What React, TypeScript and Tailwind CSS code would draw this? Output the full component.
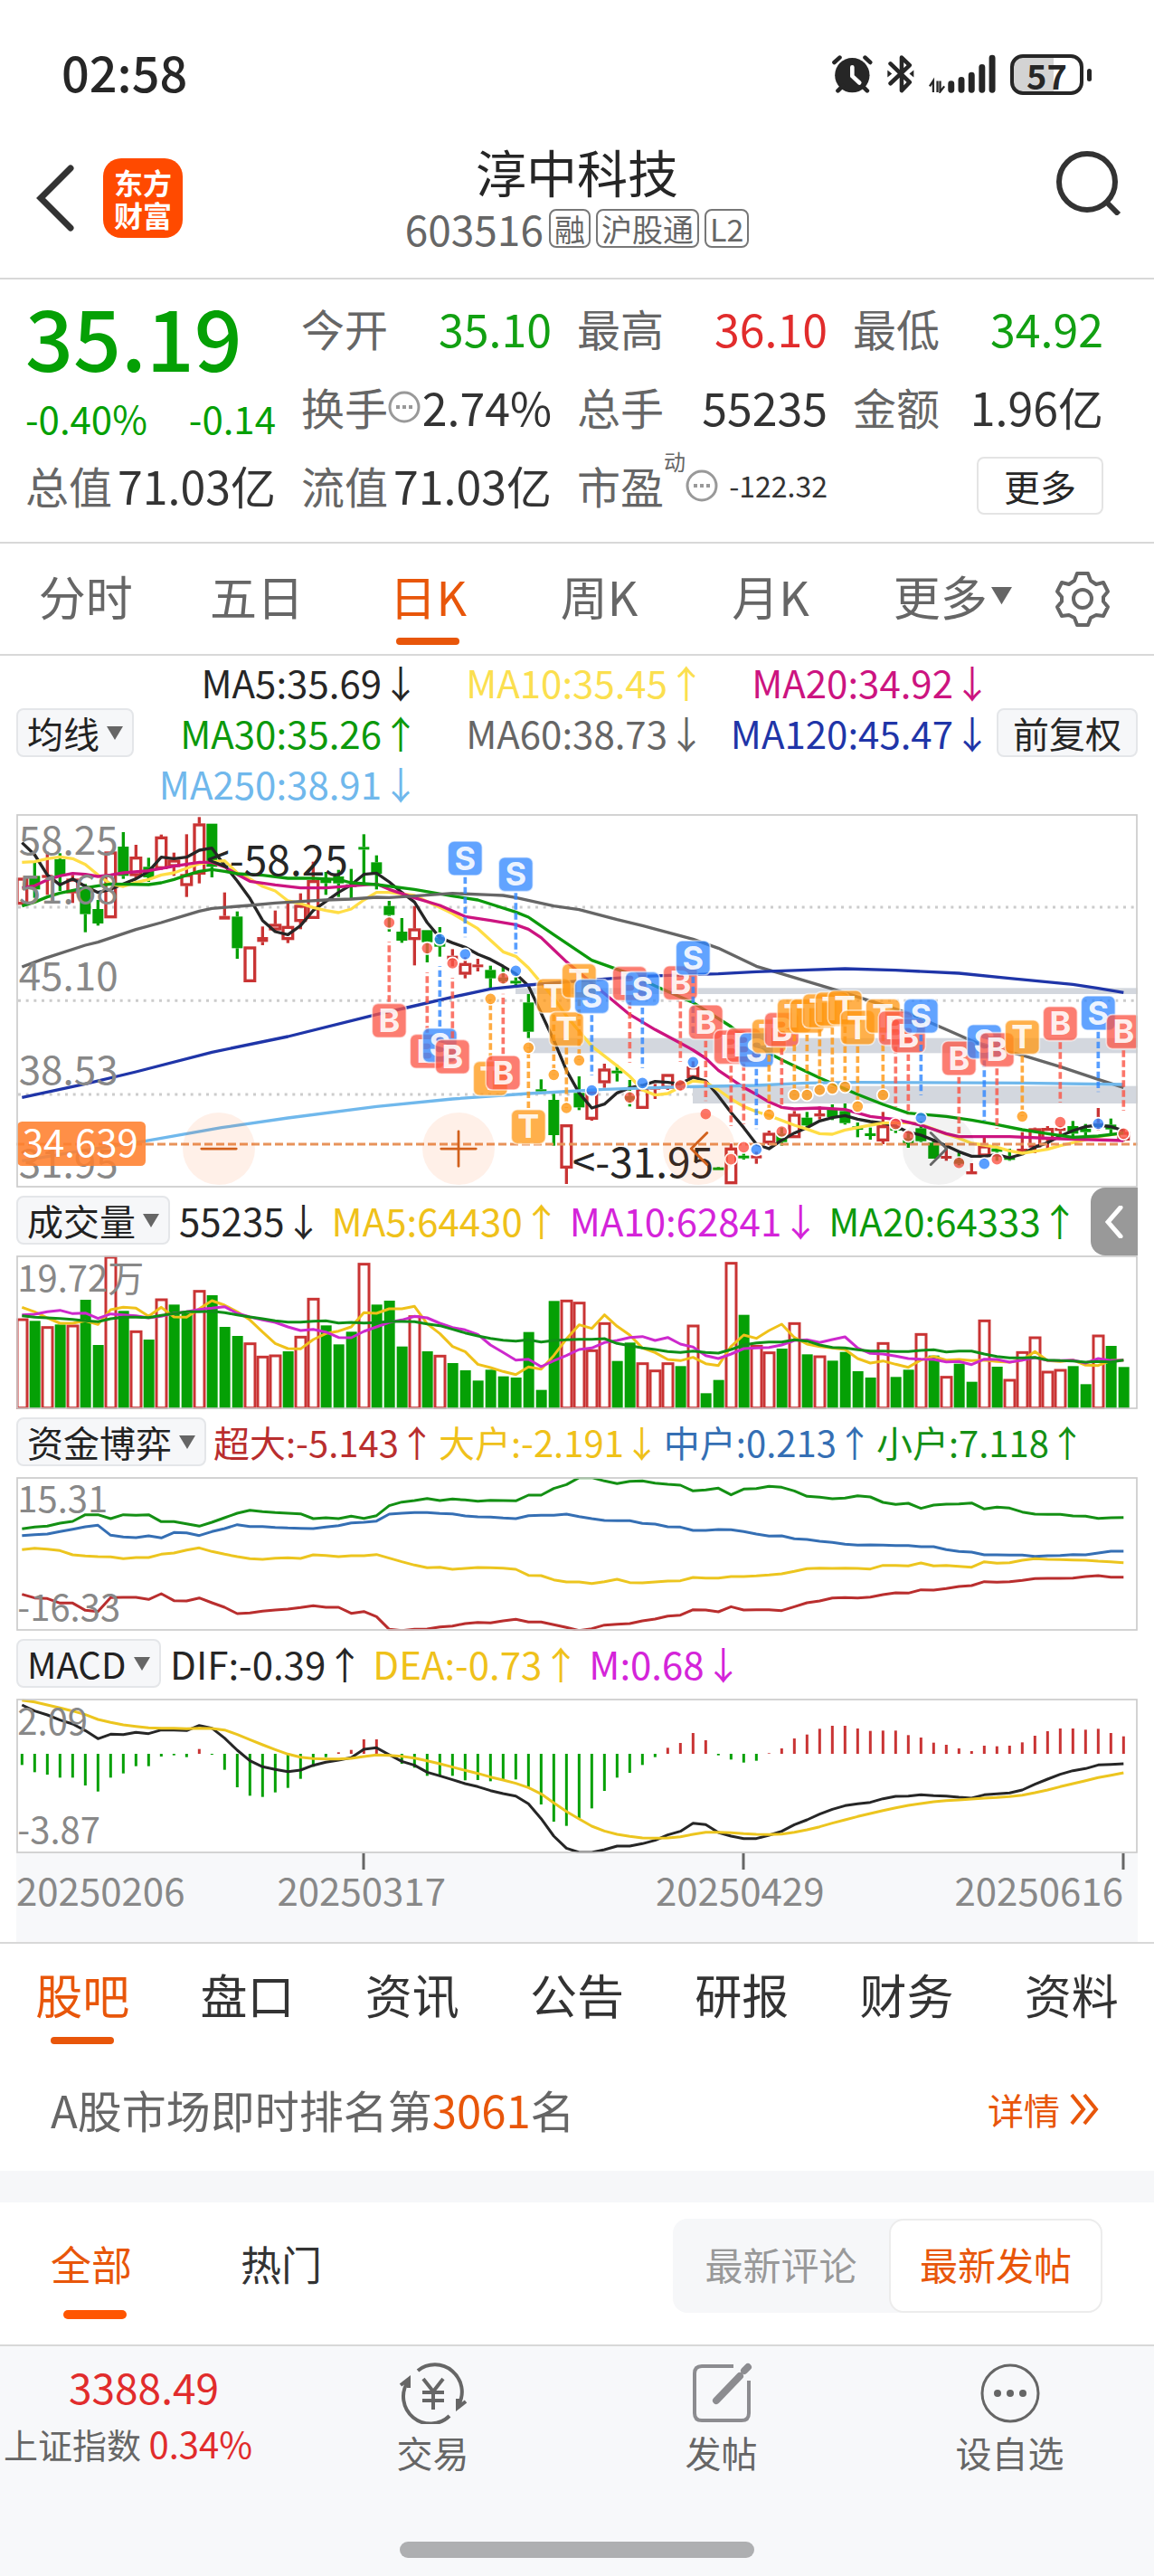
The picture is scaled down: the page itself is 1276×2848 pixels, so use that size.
import type { ReactNode } from 'react'
import { ChevronLeft, Minus, Plus, ChevronRight } from 'lucide-react'

type Point = [number, number]

// Charts are drawn in units of a third of a pixel, one candle every 42 units.
const LEFT = 54
const WIDTH = 3720
const STEP = 42

const RED = '#c93434'
const GREEN = '#05a005'

const xOf = (i: number) => 73 + STEP * i
const toPath = (points: Point[]) => points.map(([x, y]) => `${x},${y}`).join(' ')
const series = (values: number[]) => toPath(values.map((v, i) => [xOf(i), v] as Point))

// index, up/down, high, body top, body bottom, low
type Candle = [number, 'u' | 'd', number, number, number, number]

const candles: Candle[] = [
    [0, 'u', 242, 242, 330, 330], [1, 'd', 190, 235, 280, 308], [2, 'u', 155, 232, 242, 298], [3, 'd', 160, 180, 235, 285],
    [4, 'u', 232, 245, 292, 325], [5, 'd', 262, 275, 362, 422], [6, 'd', 315, 345, 393, 400], [7, 'u', 155, 155, 375, 375],
    [8, 'd', 90, 138, 235, 245], [9, 'u', 132, 172, 235, 242], [10, 'd', 175, 205, 240, 255], [11, 'u', 98, 105, 212, 215],
    [12, 'u', 158, 182, 205, 235], [13, 'u', 97, 230, 268, 305], [14, 'u', 40, 62, 230, 260], [15, 'd', 62, 62, 205, 240],
    [16, 'u', 290, 368, 380, 380], [17, 'd', 353, 370, 475, 510], [18, 'u', 470, 470, 587, 587], [19, 'u', 403, 438, 454, 465],
    [20, 'u', 350, 395, 415, 420], [21, 'u', 327, 402, 447, 458], [22, 'u', 293, 332, 387, 412], [23, 'u', 188, 250, 377, 377],
    [24, 'd', 222, 249, 259, 298], [25, 'd', 215, 237, 260, 305], [26, 'd', 212, 263, 272, 310], [27, 'd', 97, 139, 148, 260],
    [28, 'd', 167, 190, 228, 280], [29, 'd', 318, 335, 365, 420], [30, 'd', 375, 420, 450, 457], [31, 'u', 335, 410, 447, 532],
    [32, 'd', 415, 415, 455, 522], [33, 'd', 405, 440, 470, 503], [34, 'u', 478, 500, 515, 535], [35, 'u', 505, 525, 562, 575],
    [36, 'u', 510, 529, 538, 552], [37, 'd', 533, 547, 575, 610], [38, 'd', 535, 572, 585, 595], [39, 'd', 570, 583, 592, 598],
    [40, 'd', 627, 655, 752, 773], [41, 'd', 910, 943, 950, 952], [42, 'd', 958, 978, 1095, 1130], [43, 'u', 1060, 1060, 1205, 1257],
    [44, 'd', 900, 955, 1003, 1012], [45, 'u', 945, 950, 1043, 1047], [46, 'u', 858, 875, 922, 938], [47, 'd', 862, 881, 890, 917],
    [48, 'd', 912, 965, 980, 1000], [49, 'u', 930, 940, 1007, 1007], [50, 'u', 925, 936, 944, 975], [51, 'u', 893, 893, 940, 945],
    [52, 'u', 912, 925, 938, 950], [53, 'u', 850, 868, 905, 905], [55, 'd', 1200, 1202, 1211, 1211], [56, 'u', 1123, 1137, 1257, 1257],
    [57, 'd', 1155, 1163, 1172, 1176], [58, 'u', 1150, 1162, 1172, 1190], [59, 'u', 1080, 1088, 1122, 1128], [60, 'd', 1070, 1090, 1118, 1130],
    [61, 'u', 1015, 1025, 1104, 1104], [62, 'd', 1018, 1037, 1063, 1072], [63, 'u', 1000, 1023, 1033, 1043], [64, 'd', 993, 1010, 1035, 1045],
    [65, 'd', 990, 1015, 1055, 1060], [66, 'd', 1053, 1066, 1077, 1102], [67, 'd', 1070, 1089, 1098, 1110], [68, 'u', 1018, 1063, 1115, 1125],
    [69, 'd', 1060, 1070, 1080, 1088], [70, 'd', 1090, 1105, 1125, 1137], [71, 'd', 1050, 1072, 1115, 1118], [72, 'd', 1108, 1120, 1173, 1173],
    [73, 'u', 1130, 1164, 1173, 1180], [74, 'd', 1150, 1175, 1190, 1195], [75, 'u', 1188, 1215, 1225, 1225], [76, 'u', 1103, 1130, 1165, 1175],
    [77, 'd', 1130, 1139, 1150, 1180], [78, 'd', 1140, 1166, 1177, 1180], [79, 'u', 1085, 1140, 1152, 1158], [80, 'u', 1070, 1073, 1135, 1155],
    [81, 'u', 1065, 1072, 1110, 1140], [82, 'u', 1065, 1071, 1081, 1095], [83, 'd', 1048, 1065, 1090, 1108], [84, 'd', 1058, 1074, 1085, 1095],
    [85, 'u', 1005, 1055, 1068, 1080], [86, 'd', 1040, 1060, 1076, 1090], [87, 'u', 1075, 1085, 1112, 1115],
]

const ma5 = [
    125, 165, 232, 265, 245, 270, 290, 280, 262, 245, 220, 173, 178, 173, 150, 143, 200, 252, 310, 383, 420, 430,
    400, 350, 320, 290, 265, 230, 226, 255, 290, 322, 390, 440, 457, 472, 495, 512, 535, 560, 600, 690, 780, 880,
    955, 1005, 992, 955, 938, 930, 917, 920, 925, 903, 915, 965, 1020, 1070, 1125, 1140, 1112, 1088, 1070, 1048, 1037, 1030,
    1042, 1050, 1055, 1065, 1085, 1095, 1112, 1130, 1150, 1165, 1165, 1160, 1170, 1158, 1135, 1120, 1098, 1080, 1067, 1062, 1067, 1080,
]

const averages: { stroke: string; points: Point[] }[] = [
    {
        stroke: '#ffdd45',
        points: [
            [73, 190], [115, 188], [157, 178], [199, 172], [241, 178], [283, 197], [325, 232], [367, 262], [409, 270], [451, 257], [493, 247],
            [535, 232], [577, 225], [619, 210], [661, 195], [703, 188], [745, 185], [787, 225], [829, 245], [871, 270], [913, 285], [955, 318],
            [997, 327], [1039, 340], [1081, 350], [1123, 357], [1165, 345], [1207, 315], [1249, 290], [1291, 290], [1375, 300], [1417, 320],
            [1459, 340], [1501, 360], [1585, 410], [1669, 487], [1711, 502], [1753, 540], [1795, 590], [1837, 640], [1879, 700], [1921, 750],
            [1963, 800], [2047, 865], [2089, 900], [2131, 945], [2173, 962], [2215, 957], [2257, 935], [2299, 915], [2341, 920], [2383, 945],
            [2425, 975], [2467, 1000], [2509, 1017], [2551, 1030], [2635, 1062], [2677, 1075], [2719, 1090], [2761, 1092], [2803, 1078],
            [2887, 1062], [2929, 1055], [3013, 1053], [3055, 1060], [3097, 1075], [3139, 1092], [3181, 1105], [3223, 1122], [3265, 1128],
            [3307, 1135], [3349, 1147], [3391, 1155], [3475, 1142], [3517, 1130], [3559, 1120], [3643, 1100], [3727, 1088],
        ],
    },
    {
        stroke: '#cc1480',
        points: [
            [73, 275], [115, 268], [157, 248], [199, 235], [241, 227], [283, 230], [325, 237], [367, 232], [409, 225], [493, 218], [577, 203],
            [661, 190], [703, 190], [745, 205], [787, 230], [829, 253], [913, 265], [997, 275], [1081, 275], [1165, 268], [1249, 262],
            [1291, 280], [1375, 308], [1459, 333], [1543, 370], [1627, 383], [1711, 397], [1753, 412], [1795, 440], [1837, 480], [1879, 520],
            [1963, 590], [2089, 695], [2173, 745], [2257, 790], [2299, 813], [2341, 840], [2383, 880], [2467, 937], [2509, 960], [2551, 985],
            [2593, 1003], [2635, 1008], [2719, 1005], [2803, 1010], [2887, 1033], [2971, 1043], [3055, 1062], [3139, 1090], [3181, 1100],
            [3349, 1100], [3517, 1107], [3727, 1113],
        ],
    },
    {
        stroke: '#0c990c',
        points: [
            [73, 335], [115, 322], [157, 305], [199, 292], [283, 275], [325, 268], [367, 262], [493, 264], [535, 258], [577, 247], [619, 233],
            [661, 220], [703, 214], [745, 220], [787, 228], [871, 233], [955, 243], [1039, 243], [1123, 247], [1165, 258], [1249, 264],
            [1375, 280], [1501, 302], [1585, 315], [1711, 355], [1753, 372], [1837, 430], [1963, 515], [2089, 560], [2173, 600], [2299, 655],
            [2425, 735], [2509, 800], [2593, 845], [2719, 905], [2845, 960], [2929, 993], [3013, 1022], [3139, 1033], [3223, 1045],
            [3307, 1060], [3391, 1077], [3475, 1090], [3559, 1102], [3643, 1098], [3727, 1088],
        ],
    },
    {
        stroke: '#666666',
        points: [
            [73, 537], [150, 508], [283, 465], [325, 455], [451, 413], [535, 390], [661, 352], [703, 343], [829, 333], [913, 325], [997, 320],
            [1081, 315], [1165, 312], [1249, 306], [1291, 307], [1375, 302], [1501, 293], [1627, 298], [1669, 300], [1711, 307], [1837, 335],
            [1921, 347], [2047, 380], [2131, 400], [2299, 445], [2383, 475], [2509, 535], [2593, 560], [2761, 610], [2887, 650], [3013, 690],
            [3139, 745], [3265, 800], [3391, 830], [3517, 868], [3643, 910], [3727, 937],
        ],
    },
    {
        stroke: '#1f35a8',
        points: [
            [73, 970], [283, 925], [451, 885], [703, 820], [955, 768], [1249, 695], [1350, 672], [1501, 637], [1627, 610], [1753, 597],
            [1879, 587], [2005, 577], [2131, 568], [2383, 560], [2509, 553], [2677, 547], [2803, 543], [2971, 548], [3181, 558], [3349, 575],
            [3559, 595], [3643, 608], [3727, 622],
        ],
    },
    {
        stroke: '#70b8ec',
        points: [
            [73, 1180], [283, 1145], [480, 1115], [735, 1070], [955, 1038], [1249, 1000], [1501, 975], [1753, 957], [2005, 943], [2257, 935],
            [2509, 930], [2677, 922], [2845, 920], [3391, 922], [3727, 927],
        ],
    },
]

// index, letter, badge centre, dot centre
type Mark = [number, 'B' | 'S' | 'T', number, number]

const marks: Mark[] = [
    [29, 'B', 715, 390], [32, 'B', 817, 475], [33, 'S', 797, 445], [34, 'B', 835, 525], [35, 'S', 177, 495], [37, 'T', 907, 643],
    [38, 'B', 888, 575], [39, 'S', 230, 550], [40, 'T', 1067, 805], [42, 'T', 633, 895], [43, 'T', 743, 1005], [44, 'T', 583, 847],
    [45, 'S', 635, 947], [48, 'B', 592, 970], [49, 'S', 610, 922], [52, 'B', 590, 930], [53, 'S', 507, 853], [54, 'B', 720, 1025],
    [56, 'B', 803, 1175], [57, 'B', 797, 1135], [58, 'S', 813, 1143], [59, 'T', 767, 1027], [60, 'B', 745, 1083], [61, 'T', 700, 962],
    [62, 'T', 700, 962], [63, 'T', 683, 945], [64, 'T', 677, 940], [65, 'T', 672, 935], [66, 'T', 738, 1000], [68, 'T', 700, 962],
    [69, 'B', 740, 1058], [70, 'B', 765, 1098], [71, 'S', 700, 1038], [74, 'B', 840, 1187], [76, 'S', 785, 1190], [77, 'B', 812, 1175],
    [79, 'T', 770, 1033], [82, 'B', 725, 1052], [85, 'S', 690, 1057], [87, 'B', 752, 1090],
]

const markColor = { B: '#fb5445', S: '#2f86ff', T: '#ff9712' }

// days on which the price rose
const rises = new Set([
    0, 2, 4, 7, 9, 11, 14, 18, 19, 20, 22, 23, 27, 31, 33, 43, 44, 45, 46, 49, 50, 51, 53, 56, 58, 59, 61, 63, 68, 71, 73, 76,
    78, 79, 80, 81, 82, 85,
])

const volumes = [
    442, 450, 468, 462, 463, 380, 530, 235, 417, 482, 512, 376, 396, 425, 348, 365, 470, 500, 522, 566, 562, 551,
    500, 374, 465, 528, 486, 258, 396, 383, 535, 432, 551, 563, 590, 614, 648, 612, 634, 638, 487, 679, 384, 380,
    387, 545, 455, 583, 522, 588, 612, 588, 600, 463, 690, 646, 255, 430, 530, 552, 542, 455, 561, 565, 582, 553,
    617, 638, 521, 636, 612, 491, 565, 633, 592, 652, 446, 602, 643, 551, 502, 616, 610, 600, 660, 496, 533, 603,
]

const volumeLines = [
    {
        stroke: '#efc11a',
        values: [
            405, 420, 440, 458, 458, 450, 462, 413, 405, 408, 435, 405, 437, 438, 410, 383, 398, 420, 447, 487, 525, 542,
            543, 512, 492, 484, 470, 423, 425, 410, 410, 402, 460, 492, 535, 552, 594, 605, 618, 628, 603, 610, 565, 510,
            463, 475, 430, 468, 497, 540, 555, 578, 582, 571, 592, 598, 535, 497, 508, 482, 461, 505, 527, 535, 540, 545,
            575, 590, 583, 594, 604, 580, 568, 580, 578, 582, 580, 585, 587, 580, 552, 582, 585, 580, 597, 598, 582, 580,
        ],
    },
    {
        stroke: '#cd29cd',
        values: [
            430, 428, 420, 415, 426, 424, 442, 427, 430, 433, 440, 435, 425, 420, 412, 408, 403, 425, 437, 447, 455, 470,
            482, 478, 487, 505, 506, 485, 470, 455, 447, 435, 440, 458, 472, 480, 495, 530, 555, 580, 577, 602, 582, 565,
            545, 540, 522, 515, 505, 502, 515, 505, 527, 537, 565, 575, 560, 542, 540, 538, 530, 515, 513, 522, 512, 503,
            540, 558, 560, 567, 575, 577, 578, 586, 585, 595, 577, 578, 587, 580, 572, 581, 582, 580, 590, 575, 582, 580,
        ],
    },
    {
        stroke: '#0f8f17',
        values: [
            433, 438, 440, 442, 445, 450, 453, 443, 438, 438, 439, 432, 426, 420, 420, 418, 423, 430, 437, 443, 450, 454,
            454, 451, 450, 457, 455, 457, 456, 452, 452, 453, 460, 466, 478, 490, 500, 508, 514, 517, 513, 520, 515, 513,
            511, 511, 509, 525, 532, 540, 545, 552, 555, 550, 555, 557, 545, 530, 523, 520, 520, 513, 517, 530, 538, 540,
            546, 550, 550, 552, 552, 548, 546, 553, 550, 550, 560, 568, 573, 573, 571, 580, 582, 583, 587, 585, 586, 580,
        ],
    },
]

const fundLines = [
    {
        stroke: '#149014',
        values: [
            212, 206, 203, 193, 187, 165, 165, 178, 165, 167, 165, 188, 188, 195, 203, 190, 175, 160, 150, 155, 158, 160,
            162, 178, 175, 178, 170, 177, 168, 135, 123, 118, 111, 118, 113, 116, 120, 117, 118, 119, 100, 100, 78, 65,
            42, 42, 53, 62, 54, 53, 60, 64, 67, 86, 83, 77, 99, 80, 78, 71, 74, 86, 104, 107, 112, 110,
            102, 106, 124, 131, 127, 144, 133, 130, 129, 126, 146, 140, 143, 156, 163, 164, 164, 169, 170, 177, 175, 174,
        ],
    },
    {
        stroke: '#356fb4',
        values: [
            234, 231, 229, 221, 213, 205, 200, 233, 239, 241, 235, 242, 224, 225, 234, 221, 211, 198, 204, 204, 207, 209,
            210, 211, 206, 201, 192, 190, 186, 163, 160, 158, 158, 161, 162, 169, 172, 173, 176, 178, 168, 167, 167, 163,
            171, 178, 184, 185, 185, 194, 196, 205, 206, 217, 217, 214, 215, 221, 229, 236, 235, 245, 247, 253, 257, 263,
            266, 265, 266, 267, 267, 271, 271, 281, 287, 289, 298, 298, 299, 299, 303, 301, 300, 297, 298, 292, 286, 286,
        ],
    },
    {
        stroke: '#ecc51f',
        values: [
            281, 276, 279, 284, 298, 302, 304, 305, 311, 307, 307, 296, 292, 282, 275, 287, 296, 304, 311, 313, 309, 308,
            310, 298, 300, 304, 301, 301, 297, 309, 321, 332, 341, 339, 346, 343, 340, 341, 342, 346, 366, 367, 381, 388,
            388, 393, 387, 379, 390, 391, 388, 385, 384, 373, 375, 375, 370, 370, 368, 365, 361, 353, 344, 342, 343, 342,
            343, 345, 333, 333, 335, 325, 335, 333, 336, 339, 321, 326, 324, 316, 311, 313, 314, 315, 316, 319, 321, 324,
        ],
    },
    {
        stroke: '#b92e2e',
        values: [
            429, 441, 443, 458, 458, 482, 486, 440, 439, 439, 446, 427, 450, 451, 441, 457, 472, 493, 491, 485, 481, 478,
            473, 467, 472, 472, 492, 486, 503, 545, 549, 545, 544, 537, 534, 526, 522, 524, 517, 512, 521, 521, 530, 539,
            549, 543, 531, 528, 526, 517, 511, 501, 498, 480, 481, 487, 470, 481, 480, 480, 483, 470, 457, 451, 441, 440,
            441, 438, 430, 424, 425, 414, 415, 410, 403, 400, 387, 389, 387, 383, 377, 376, 376, 375, 370, 367, 372, 372,
        ],
    },
]

const macdBars = [
    994, 1018, 1026, 1036, 1036, 1062, 1082, 1036, 1022, 998, 998, 966, 962, 968, 941, 960, 1010, 1068, 1096, 1100, 1085, 1070,
    1040, 1000, 968, 952, 944, 909, 909, 965, 990, 1003, 1030, 1030, 1030, 1045, 1044, 1048, 1045, 1042, 1070, 1125, 1182, 1196,
    1170, 1138, 1080, 1036, 1020, 994, 968, 937, 921, 888, 912, 962, 976, 986, 980, 955, 939, 906, 893, 874, 864, 864,
    873, 881, 880, 880, 895, 903, 920, 927, 939, 948, 930, 932, 930, 919, 897, 882, 873, 873, 877, 874, 888, 899,
]

const dif = [
    795, 815, 828, 845, 858, 880, 907, 892, 893, 886, 890, 878, 878, 880, 863, 872, 905, 945, 980, 1000, 1009, 1016,
    1011, 995, 985, 978, 970, 942, 937, 960, 982, 995, 1018, 1030, 1043, 1056, 1066, 1079, 1089, 1097, 1123, 1172, 1230, 1270,
    1284, 1284, 1275, 1263, 1263, 1255, 1244, 1226, 1214, 1187, 1192, 1218, 1230, 1238, 1238, 1227, 1214, 1192, 1176, 1157, 1141, 1129,
    1123, 1118, 1106, 1098, 1097, 1093, 1096, 1097, 1101, 1104, 1093, 1090, 1087, 1077, 1058, 1041, 1025, 1013, 1006, 994, 992, 990,
]

const dea = [
    779, 785, 795, 805, 815, 827, 843, 853, 861, 866, 871, 872, 872, 874, 872, 873, 878, 893, 910, 927, 943, 958,
    968, 973, 974, 974, 972, 966, 961, 962, 965, 971, 980, 990, 1001, 1012, 1022, 1034, 1044, 1055, 1069, 1090, 1120, 1148,
    1173, 1197, 1213, 1224, 1231, 1236, 1237, 1236, 1232, 1224, 1217, 1217, 1219, 1222, 1224, 1225, 1223, 1217, 1209, 1199, 1187, 1176,
    1165, 1155, 1145, 1136, 1128, 1122, 1116, 1112, 1110, 1107, 1104, 1102, 1099, 1094, 1086, 1077, 1066, 1056, 1046, 1036, 1028, 1020,
]

const Line = ({ points, stroke, width = 9 }: { points: string; stroke: string; width?: number }) => (
    <polyline points={points} fill="none" stroke={stroke} strokeWidth={width} strokeLinejoin="round" />
)

const Frame = ({ top, height }: { top: number; height: number }) => (
    <rect x={LEFT + 3} y={top + 3} width={WIDTH - 6} height={height - 6} fill="none" stroke="#cbcbcb" strokeWidth={5} />
)

const CandleShape = ({ candle }: { candle: Candle }) => {
    const [i, dir, high, top, bottom, low] = candle
    const x = xOf(i)
    const color = dir === 'u' ? RED : GREEN
    const hollow = dir === 'u' && bottom - top > 17

    return (
        <g stroke={color} strokeWidth={10} fill="none">
            {high < top && <path d={`M${x} ${high}V${top}`} />}
            {low > bottom && <path d={`M${x} ${bottom}V${low}`} />}
            {hollow
                ? <rect x={x - 16} y={top + 4} width={32} height={bottom - top - 8} />
                : <rect x={x - 18} y={top} width={36} height={bottom - top} fill={color} stroke="none" />}
        </g>
    )
}

const MarkShape = ({ mark }: { mark: Mark }) => {
    const [i, letter, badge, dot] = mark
    const x = xOf(i)
    const color = markColor[letter]
    const dir = dot < badge ? -1 : 1

    return (
        <g>
            <path d={`M${x} ${badge + dir * 62}V${badge + dir * 262}`} stroke={color} strokeWidth={11} strokeDasharray="22 11" opacity={0.8} />
            <circle cx={x} cy={dot} r={20} fill={color} fillOpacity={0.8} stroke="#fff" strokeWidth={5} />
            <rect x={x - 57} y={badge - 57} width={114} height={114} rx={20} fill={color} fillOpacity={0.76} stroke="#fff" strokeOpacity={0.6} strokeWidth={5} />
            <text x={x} y={badge + 38} textAnchor="middle" fontSize={108} fontWeight={700} fill="#fff" fillOpacity={0.9} fontFamily="Inter, sans-serif">{letter}</text>
        </g>
    )
}

const ChartButton = ({ label, muted, children }: { label: string; muted?: boolean; children: ReactNode }) => (
    <button
        aria-label={label}
        className={muted
            ? 'flex size-20 items-center justify-center rounded-full bg-black/5 text-[#666666]'
            : 'flex size-20 items-center justify-center rounded-full bg-[#ff5500]/9'}
    >
        {children}
    </button>
)

const PriceChart = () => (
    <div className="relative">
        <svg viewBox="54 30 3720 1239" className="block w-full">
            {[339, 649, 960].map(y => (
                <path key={y} d={`M60 ${y}H3768`} stroke="#cccccc" strokeWidth={9} strokeDasharray="9 17" />
            ))}
            <g fill="#d3d7de">
                <rect x={1710} y={607} width={2064} height={20} />
                <rect x={1755} y={773} width={2019} height={50} />
                <rect x={2298} y={932} width={1476} height={58} />
            </g>
            {candles.map(c => <CandleShape key={c[0]} candle={c} />)}
            <Line points={series(ma5)} stroke="#262626" width={10} />
            {averages.map(a => <Line key={a.stroke} points={toPath(a.points)} stroke={a.stroke} width={10} />)}
            <g fontSize={132} fill="#888888">
                <text x={62} y={164}>58.25</text>
                <text x={62} y={326}>51.68</text>
                <text x={62} y={616}>45.10</text>
                <text x={62} y={926}>38.53</text>
                <text x={62} y={1236}>31.95</text>
            </g>
            <g fontSize={138} fill="#262626">
                <text x={685} y={235}>&lt;-58.25</text>
                <text x={1898} y={1236}>&lt;-31.95</text>
            </g>
            <path d="M54 1125H3774" stroke="#e8935a" strokeWidth={9} strokeDasharray="27 12" />
            {marks.map(m => <MarkShape key={m[0]} mark={m} />)}
            <rect x={57} y={1050} width={426} height={147} rx={16} fill="#ff7f2e" fillOpacity={0.88} />
            <text x={74} y={1168} fontSize={126} fill="#fff">34.639</text>
            <Frame top={30} height={1239} />
        </svg>
        <div className="absolute bottom-[3px] left-[184px] right-[180px] flex justify-between text-[#d2611c]">
            <ChartButton label="缩小"><Minus size={66} strokeWidth={1} /></ChartButton>
            <ChartButton label="放大"><Plus size={66} strokeWidth={1} /></ChartButton>
            <ChartButton label="左移"><ChevronLeft size={70} strokeWidth={1} /></ChartButton>
            <ChartButton label="右移" muted><ChevronRight size={70} strokeWidth={1} /></ChartButton>
        </div>
    </div>
)

const VolumeChart = () => (
    <svg viewBox="54 233 3720 510" className="block w-full">
        {volumes.map((v, i) => rises.has(i)
            ? <rect key={i} x={xOf(i) - 16} y={v + 4} width={33} height={735 - v} fill="#fff" stroke={RED} strokeWidth={9} />
            : <rect key={i} x={xOf(i) - 17} y={v} width={36} height={741 - v} fill={GREEN} />)}
        {volumeLines.map(l => <Line key={l.stroke} points={series(l.values)} stroke={l.stroke} />)}
        <text x={58} y={352} fontSize={120} fill="#888888">19.72万</text>
        <Frame top={233} height={510} />
    </svg>
)

const FundChart = () => (
    <svg viewBox="54 40 3720 510" className="block w-full">
        {fundLines.map(l => <Line key={l.stroke} points={series(l.values)} stroke={l.stroke} />)}
        <g fontSize={120} fill="#888888">
            <text x={58} y={158}>15.31</text>
            <text x={58} y={518}>-16.33</text>
        </g>
        <Frame top={40} height={510} />
    </svg>
)

const MacdChart = () => (
    <svg viewBox="54 774 3720 513" className="block w-full">
        {macdBars.map((v, i) => (
            <path key={i} d={`M${xOf(i)} 957V${v}`} stroke={v < 957 ? RED : GREEN} strokeWidth={9} />
        ))}
        <Line points={series(dif)} stroke="#262626" />
        <Line points={series(dea)} stroke="#ecc51f" />
        <g fontSize={120} fill="#888888">
            <text x={58} y={893}>2.09</text>
            <text x={58} y={1253}>-3.87</text>
        </g>
        <Frame top={774} height={513} />
    </svg>
)

const Triangle = ({ className }: { className: string }) => (
    <svg viewBox="0 0 18 15" className={className}><path d="M0 0H18L9 15Z" fill="currentColor" /></svg>
)

const Picker = ({ name, label }: { name: string; label: string }) => (
    <div className="relative shrink-0">
        <select
            aria-label={label}
            className="block h-[54px] appearance-none rounded-lg border-2 border-[#e4e6e9] bg-[#f6f7f9] pl-2.5 pr-9 text-[40px] leading-[50px] text-[#222222]"
        >
            <option>{name}</option>
        </select>
        <Triangle className="pointer-events-none absolute right-3 top-5 w-[18px] text-[#666666]" />
    </div>
)

const maLegend = [
    { text: 'MA5:35.69↓', color: 'text-[#262626]' },
    { text: 'MA10:35.45↑', color: 'text-[#fbdf4f]' },
    { text: 'MA20:34.92↓', color: 'text-[#cc1480]' },
    { text: 'MA30:35.26↑', color: 'text-[#0c990c]' },
    { text: 'MA60:38.73↓', color: 'text-[#666666]' },
    { text: 'MA120:45.47↓', color: 'text-[#1f35a8]' },
    { text: 'MA250:38.91↓', color: 'text-[#70b8ec]' },
]

const StatusBar = () => (
    <div className="flex h-28 items-end justify-between pl-[68px] pr-[69px]">
        <span className="text-[54px] font-medium leading-[66px] text-[#262626]">02:58</span>
        <div className="flex h-[52px] items-start gap-4">
            <svg viewBox="57 30 135 130" className="h-[43px] w-[45px]">
                <circle cx="124" cy="100" r="58" fill="#262626" />
                <path d="M64 57L82 41M184 57L167 41M76 152L92 136M174 152L158 136" stroke="#262626" strokeWidth="14" strokeLinecap="round" />
                <path d="M124 73V103L148 125" stroke="#fff" strokeWidth="14" fill="none" strokeLinecap="round" strokeLinejoin="round" />
            </svg>
            <svg viewBox="240 30 92 130" className="h-[43px] w-[30px]">
                <path d="M251 61L316 124L289 152V40L316 66L251 128" stroke="#262626" strokeWidth="14" fill="none" strokeLinecap="round" strokeLinejoin="round" />
                <path d="M241 83L256 95L241 107ZM330 83L315 95L330 107Z" fill="#262626" />
            </svg>
            <svg viewBox="380 30 222 130" className="h-[43px] w-[74px]">
                <path d="M454 129V149M488 116V149M522 100V149M557 74V149M591 43V149" stroke="#262626" strokeWidth="21" strokeLinecap="round" />
                <path d="M382 137L394 119V157M408 119V157M417 119V155L431 137" stroke="#262626" strokeWidth="7" fill="none" />
            </svg>
            <div className="flex items-center gap-1">
                <div className="flex h-[45px] w-[81px] items-center justify-center rounded-[14px] border-4 border-[#262626] bg-linear-to-r from-[#d3d3d3] from-60% to-white to-60% text-[38px] font-bold leading-[38px] text-[#262626]">57</div>
                <div className="h-[14px] w-[5px] rounded-full bg-[#262626]" />
            </div>
        </div>
    </div>
)

const Tag = ({ children }: { children: string }) => (
    <span className="rounded-lg border-2 border-[#777777] px-1 text-[34px] leading-[39px] text-[#666666]">{children}</span>
)

const Header = () => (
    <header className="flex items-center justify-between border-b-2 border-[#d8d8d8] px-9 pb-[27px] pt-[46px]">
        <div className="flex w-[200px] items-center gap-7">
            <button aria-label="返回">
                <svg viewBox="0 0 50 76" className="h-[76px] w-[50px]">
                    <path d="M42 5L9 38L42 71" fill="none" stroke="#333333" strokeWidth="7" strokeLinecap="round" />
                </svg>
            </button>
            <div className="flex size-[88px] flex-col items-center justify-center rounded-[20px] bg-[#ff4a00] text-[32px] font-bold leading-9 text-white">
                <span>东方</span>
                <span>财富</span>
            </div>
        </div>
        <div className="flex flex-col items-center gap-2.5 pb-1.5">
            <h1 className="text-[56px] leading-[62px] text-[#262626]">淳中科技</h1>
            <div className="flex items-center gap-1.5 text-[46px] leading-[44px] text-[#666666]">
                603516<Tag>融</Tag><Tag>沪股通</Tag><Tag>L2</Tag>
            </div>
        </div>
        <div className="flex w-[200px] justify-end self-start pt-1">
            <button aria-label="搜索">
                <svg viewBox="0 0 76 76" className="size-[76px]">
                    <circle cx="38" cy="39" r="31" fill="none" stroke="#333333" strokeWidth="6" />
                    <path d="M60 62L73 75" stroke="#333333" strokeWidth="6" />
                </svg>
            </button>
        </div>
    </header>
)

const Hint = () => (
    <svg viewBox="0 0 36 36" className="size-9 shrink-0">
        <circle cx="18" cy="18" r="16" fill="none" stroke="#999999" strokeWidth="3" />
        <path d="M9 18h4M16 18h4M23 18h4" stroke="#999999" strokeWidth="4" />
    </svg>
)

const Quote = ({ label, value, color = 'text-[#333333]' }: { label: string; value: string; color?: string }) => (
    <div className="flex items-center justify-between">
        <span className="text-[48px] text-[#666666]">{label}</span>
        <span className={color}>{value}</span>
    </div>
)

const QuotePanel = () => (
    <section className="grid grid-cols-4 gap-x-7 border-b-2 border-[#d8d8d8] pb-[19px] pl-7 pr-14 pt-2.5 text-[50px] leading-[87px]">
        <div className="row-span-2 flex flex-col gap-2 text-[#05a005]">
            <span className="text-[93px] font-medium leading-[104px]">35.19</span>
            <div className="flex justify-between text-[42px] leading-[62px]">
                <span>-0.40%</span>
                <span>-0.14</span>
            </div>
        </div>
        <Quote label="今开" value="35.10" color="text-[#12a012]" />
        <Quote label="最高" value="36.10" color="text-[#e12c2c]" />
        <Quote label="最低" value="34.92" color="text-[#12a012]" />
        <div className="flex items-center justify-between">
            <span className="flex items-center text-[48px] text-[#666666]">换手<Hint /></span>
            <span className="text-[#333333]">2.74%</span>
        </div>
        <Quote label="总手" value="55235" />
        <Quote label="金额" value="1.96亿" />
        <Quote label="总值" value="71.03亿" />
        <Quote label="流值" value="71.03亿" />
        <div className="flex items-center justify-between">
            <span className="flex items-center text-[48px] text-[#666666]">
                市盈<sup className="self-start text-[24px] leading-[58px]">动</sup><Hint />
            </span>
            <span className="text-[32px] text-[#333333]">-122.32</span>
        </div>
        <button className="h-16 w-[140px] place-self-end self-center rounded-lg border-2 border-[#e4e4e4] text-[40px] leading-[56px] text-[#262626]">更多</button>
    </section>
)

const periods = ['分时', '五日', '日K', '周K', '月K']

const PeriodTabs = () => (
    <nav className="flex h-[124px] items-center border-b-2 border-[#d8d8d8] pr-12 text-[52px] leading-[64px] text-[#666666]">
        <div className="grid h-full flex-1 grid-cols-6">
            {periods.map(p => (
                <button key={p} className={p === '日K' ? 'relative pb-1.5 text-[#e8560a]' : 'relative pb-1.5'}>
                    {p}
                    {p === '日K' && <span className="absolute bottom-2.5 left-1/2 h-2 w-[70px] -translate-x-1/2 rounded-full bg-[#e8560a]" />}
                </button>
            ))}
            <button className="flex items-center justify-center gap-1 pb-1.5 pl-6">
                更多<Triangle className="w-[23px]" />
            </button>
        </div>
        <button aria-label="设置" className="flex w-[92px] justify-end">
            <svg viewBox="0 0 60 62" className="h-[62px] w-[62px]" fill="none" stroke="#666666" strokeWidth="4" strokeLinejoin="round">
                <path d="M24 3h12l3 8 6 4 8-2 5 10-5 6v5l5 6-5 10-8-1-6 3-3 8H24l-3-8-6-3-8 1-5-10 5-6v-5l-5-6 5-10 8 2 6-4z" />
                <circle cx="30" cy="31" r="10" />
            </svg>
        </button>
    </nav>
)

const sections = ['股吧', '盘口', '资讯', '公告', '研报', '财务', '资料']

const App = () => (
    <main className="min-h-screen w-full bg-white font-['Noto_Sans_CJK_SC',sans-serif] text-[#262626]">
        <StatusBar />
        <Header />
        <QuotePanel />
        <PeriodTabs />

        <section className="px-[18px]">
            <div className="flex h-[175px] items-center pb-1.5">
                <Picker name="均线" label="主图指标" />
                <ul className="grid flex-1 grid-cols-3 text-right text-[42px] leading-[56px]">
                    {maLegend.map(m => <li key={m.text} className={m.color}>{m.text}</li>)}
                </ul>
                <button className="ml-1.5 h-[54px] rounded-lg border-2 border-[#e4e6e9] bg-[#f6f7f9] px-4 text-[40px] leading-[48px]">前复权</button>
            </div>
            <PriceChart />

            <div className="flex h-[75px] items-center gap-2.5 pb-1 text-[42px] leading-[54px]">
                <Picker name="成交量" label="副图指标一" />
                <span>55235↓</span>
                <span className="text-[#efc11a]">MA5:64430↑</span>
                <span className="text-[#d424d9]">MA10:62841↓</span>
                <span className="text-[#0c990c]">MA20:64333↑</span>
                <button aria-label="展开" className="ml-auto flex h-[75px] w-[52px] items-center justify-center self-start rounded-l-2xl bg-[#999999]">
                    <svg viewBox="0 0 20 36" className="h-9 w-5">
                        <path d="M17 2L3 18L17 34" fill="none" stroke="#fff" strokeWidth="5" strokeLinecap="round" />
                    </svg>
                </button>
            </div>
            <VolumeChart />

            <div className="flex h-[75px] items-center gap-1 pb-1 text-[40px] leading-[54px]">
                <Picker name="资金博弈" label="副图指标二" />
                <span className="pl-1 text-[#b92e2e]">超大:-5.143↑</span>
                <span className="text-[#efc11a]">大户:-2.191↓</span>
                <span className="text-[#356fb4]">中户:0.213↑</span>
                <span className="text-[#149014]">小户:7.118↑</span>
            </div>
            <FundChart />

            <div className="flex h-[75px] items-center gap-2.5 pb-1 text-[42px] leading-[54px]">
                <Picker name="MACD" label="副图指标三" />
                <span>DIF:-0.39↑</span>
                <span className="text-[#efc11a]">DEA:-0.73↑</span>
                <span className="text-[#d424d9]">M:0.68↓</span>
            </div>
            <MacdChart />

            <div className="relative h-[98px] bg-[#f7f8fa] text-[42px] leading-[80px] text-[#888888]">
                <svg viewBox="0 0 1240 18" className="block w-full">
                    <path d="M384 0V18M804 0V18M1224 0V18" stroke="#666666" strokeWidth="3" />
                </svg>
                <div className="absolute inset-x-0 top-0 flex justify-between pr-4">
                    <span>20250206</span>
                    <span className="ml-3.5">20250317</span>
                    <span className="ml-36">20250429</span>
                    <span className="ml-14">20250616</span>
                </div>
            </div>
        </section>

        <nav className="grid h-[125px] grid-cols-7 border-t-2 border-[#d8d8d8] text-[52px] leading-[64px] text-[#333333]">
            {sections.map(s => (
                <button key={s} className={s === '股吧' ? 'relative pb-3 text-[#e8560a]' : 'relative pb-3'}>
                    {s}
                    {s === '股吧' && <span className="absolute bottom-3 left-1/2 h-2 w-[70px] -translate-x-1/2 rounded-full bg-[#e8560a]" />}
                </button>
            ))}
        </nav>

        <div className="flex h-32 items-center justify-between pb-2 pl-14 pr-[60px]">
            <p className="text-[49px] leading-[60px] text-[#666666]">A股市场即时排名第<span className="text-[#e8560a]">3061</span>名</p>
            <a href="#rank" className="flex items-center gap-2.5 text-[40px] leading-[60px] text-[#e8560a]">
                详情
                <svg viewBox="0 0 34 36" className="h-9 w-[34px]" fill="none" stroke="currentColor" strokeWidth="4">
                    <path d="M3 2L16 18L3 34M17 2L30 18L17 34" />
                </svg>
            </a>
        </div>
        <div className="h-[35px] bg-[#f6f7f9]" />

        <div className="flex h-[157px] items-center justify-between pb-[18px] pl-14 pr-[57px]">
            <div className="flex h-full gap-[120px] text-[45px] leading-[60px]">
                <button className="relative pb-1 text-[#e8560a]">
                    全部
                    <span className="absolute bottom-2.5 left-3.5 h-2.5 w-[70px] rounded-full bg-[#ff5500]" />
                </button>
                <button className="pb-1 text-[#333333]">热门</button>
            </div>
            <div className="flex h-[104px] rounded-2xl bg-[#f6f7f9] text-[42px] leading-[60px]">
                <button className="w-[239px] pb-1 text-[#999999]">最新评论</button>
                <button className="w-[236px] rounded-2xl border-2 border-[#ececec] bg-white pb-1 text-[#e8560a]">最新发帖</button>
            </div>
        </div>

        <footer className="h-64 border-t-2 border-[#d8d8d8] bg-[#f7f8fa] text-[#666666]">
            <nav className="grid h-[190px] grid-cols-4 pt-3">
                <a href="#index" className="flex flex-col items-start whitespace-nowrap pl-1 text-[38px] leading-[62px]">
                    <span className="w-[310px] text-center text-[46px] leading-[64px] text-[#e12c2c]">3388.49</span>
                    <span>上证指数 <span className="text-[40px] text-[#e12c2c]">0.34%</span></span>
                </a>
                <button className="flex flex-col items-center gap-1 pt-1.5 text-[40px] leading-[54px]">
                    <svg viewBox="0 0 78 68" className="h-[68px] w-[78px]" fill="none" stroke="#666666" strokeWidth="4">
                        <path d="M22 9A30 30 0 0 1 67 47M57 59A30 30 0 0 1 11 21M3 25L12 18V28M75 43L66 50V40" />
                        <path d="M28 18L39 32L50 18M39 32V52M27 33H51M27 42H51" />
                    </svg>
                    交易
                </button>
                <button className="flex flex-col items-center gap-1 pt-1.5 text-[40px] leading-[54px]">
                    <svg viewBox="0 0 68 68" className="size-[68px]" fill="none" stroke="#8c8c90" strokeWidth="4">
                        <path d="M47 4H12Q4 4 4 12V56Q4 64 12 64H56Q64 64 64 56V20" />
                        <path d="M28 42L54 15M59 9L63 5" strokeWidth="8" strokeLinecap="round" />
                    </svg>
                    发帖
                </button>
                <button className="flex flex-col items-center gap-1 pt-1.5 text-[40px] leading-[54px]">
                    <svg viewBox="0 0 68 68" className="size-[68px]">
                        <circle cx="34" cy="34" r="31" fill="none" stroke="#666666" strokeWidth="3" />
                        <g fill="#666666"><circle cx="20" cy="34" r="4" /><circle cx="34" cy="34" r="4" /><circle cx="48" cy="34" r="4" /></g>
                    </svg>
                    设自选
                </button>
            </nav>
            <div className="mx-auto mt-[26px] h-[18px] w-[392px] rounded-full bg-[#aeafb1]" />
        </footer>
    </main>
)

export default App
